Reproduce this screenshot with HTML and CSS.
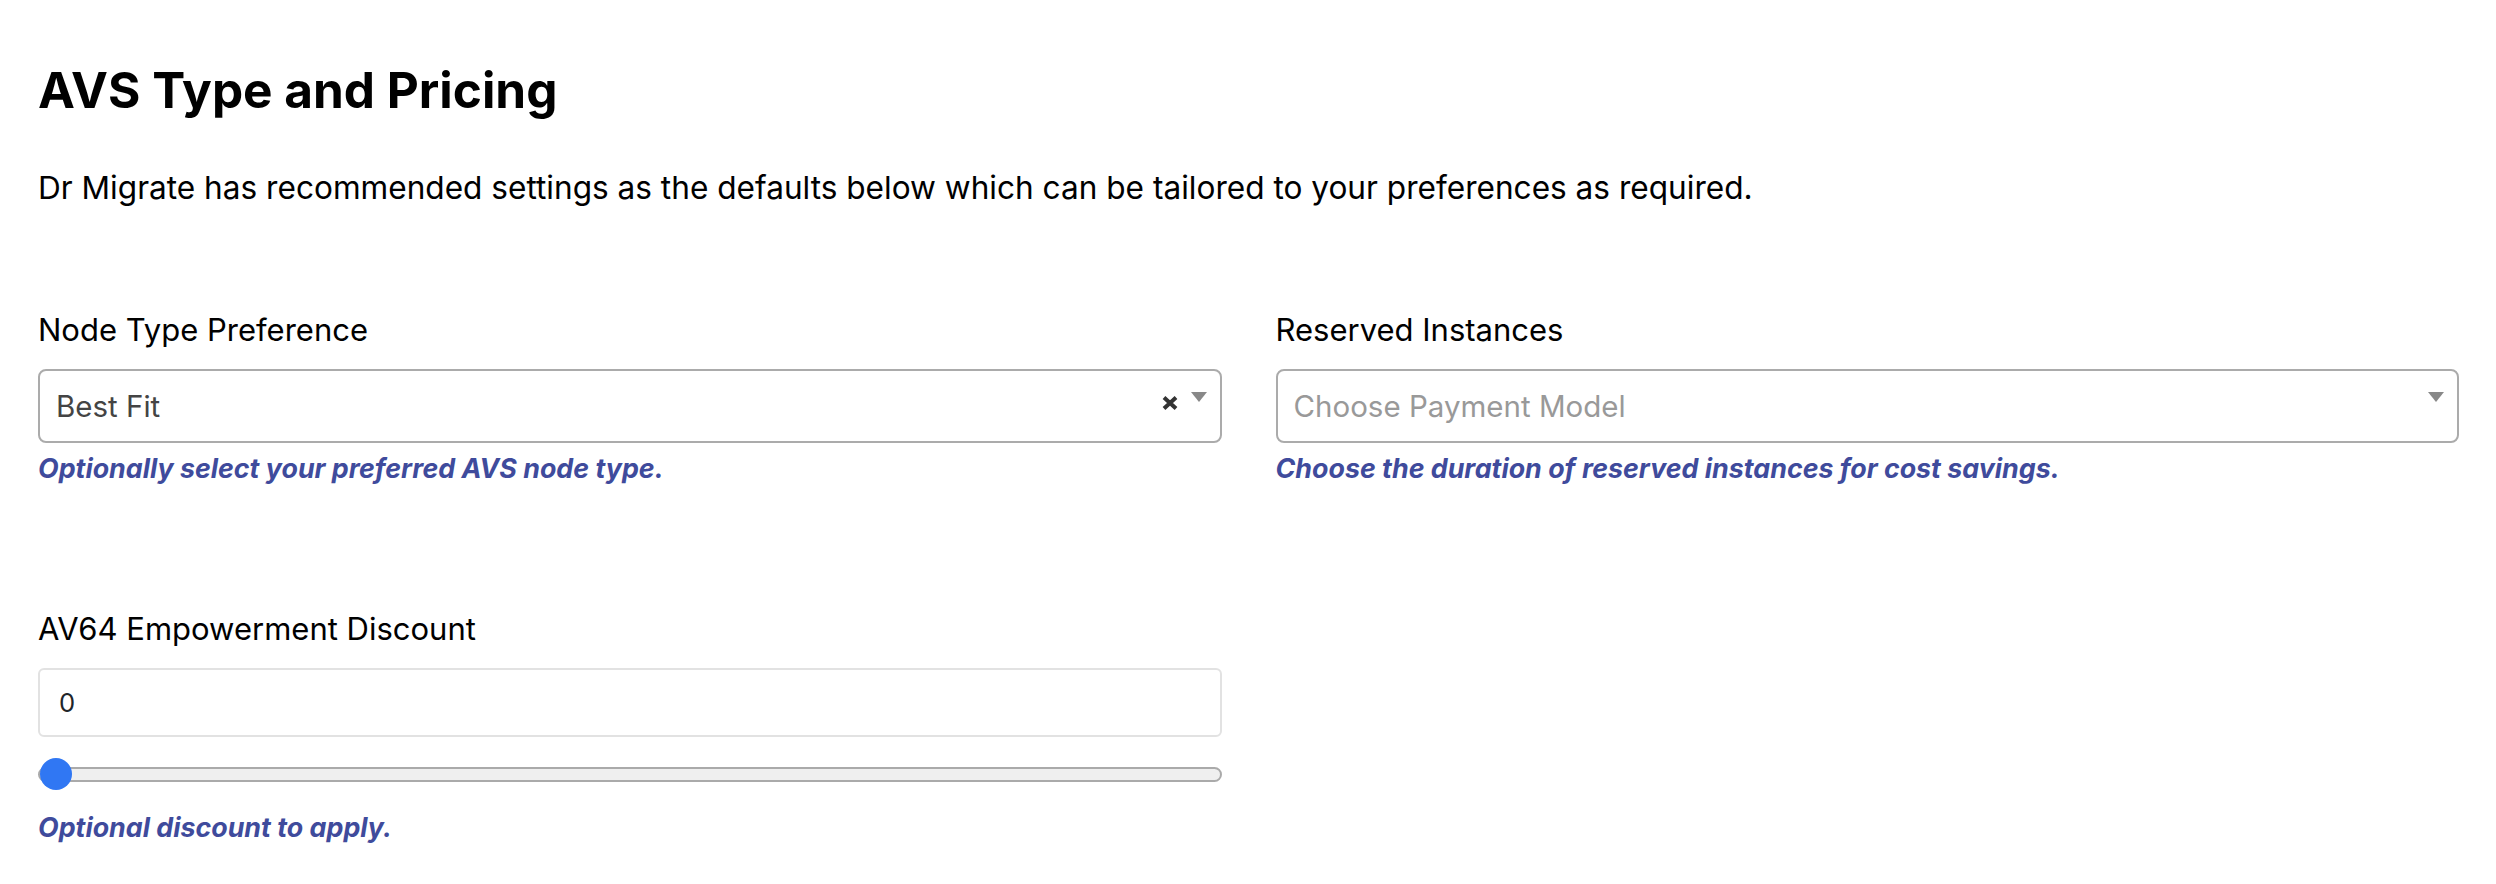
FILE: index.html
```html
<!DOCTYPE html>
<html lang="en">
<head>
<meta charset="utf-8">
<title>AVS Type and Pricing</title>
<link rel="stylesheet" href="styles.css">
</head>
<body>
<main class="page">
  <h2 class="title">AVS Type and Pricing</h2>
  <p class="intro">Dr Migrate has recommended settings as the defaults below which can be tailored to your preferences as required.</p>

  <div class="grid">
    <div class="field">
      <label class="label">Node Type Preference</label>
      <div class="select">
        <span class="select-value">Best Fit</span>
        <span class="select-clear" aria-label="clear">
          <svg width="16" height="14" viewBox="0 0 16 14"><path d="M2 1.5 L14 12.5 M14 1.5 L2 12.5" stroke="#333" stroke-width="4" fill="none"/></svg>
        </span>
        <span class="select-arrow"></span>
      </div>
      <div class="help">Optionally select your preferred AVS node type.</div>
    </div>

    <div class="field">
      <label class="label">Reserved Instances</label>
      <div class="select">
        <span class="select-value placeholder">Choose Payment Model</span>
        <span class="select-arrow"></span>
      </div>
      <div class="help">Choose the duration of reserved instances for cost savings.</div>
    </div>

    <div class="field row2">
      <label class="label">AV64 Empowerment Discount</label>
      <input class="number" type="text" value="0">
      <input class="range" type="range" min="0" max="100" value="0">
      <div class="help help-slider">Optional discount to apply.</div>
    </div>
  </div>
</main>
</body>
</html>
```

FILE: styles.css
```css
* { box-sizing: border-box; }

html, body {
  margin: 0;
  padding: 0;
  background: #ffffff;
}

body {
  font-family: "Inter", "Noto Sans", sans-serif;
  color: #000;
}

.page {
  padding: 60px 37px 0 38px;
}

.title {
  margin: 0;
  font-size: 49.5px;
  line-height: 61px;
  font-weight: 700;
  color: #000;
}

.intro {
  margin: 43px 0 0;
  font-size: 31.6px;
  line-height: 48px;
  font-weight: 400;
  color: #000;
}

.grid {
  display: grid;
  grid-template-columns: 1fr 1fr;
  column-gap: 54px;
  row-gap: 121px;
  margin-top: 96px;
}

.field {
  display: flex;
  flex-direction: column;
  min-width: 0;
}

.row2 { grid-column: 1; }

.label {
  font-size: 31px;
  line-height: 43px;
  font-weight: 400;
  color: #000;
}

.select {
  margin-top: 18px;
  height: 74px;
  border: 2px solid #ababab;
  border-radius: 8px;
  display: flex;
  align-items: flex-start;
  padding: 0 13px 0 16px;
}

.select-value {
  flex: 1;
  font-size: 29.5px;
  line-height: 70px;
  color: #444;
}

.select-value.placeholder { color: #999; }

.select-clear {
  margin-top: 25px;
  margin-right: 13px;
  display: flex;
}

.select-arrow {
  margin-top: 21px;
  width: 0;
  height: 0;
  border-left: 8px solid transparent;
  border-right: 8px solid transparent;
  border-top: 10px solid #888;
}

.help {
  margin-top: 7px;
  font-size: 26.8px;
  line-height: 36px;
  font-weight: 700;
  font-style: italic;
  color: #3f4b9c;
}

.number {
  margin: 18px 0 0;
  height: 69px;
  border: 2px solid #e2e2e2;
  border-radius: 6px;
  padding: 0 19px;
  font-family: "Inter", "Noto Sans", sans-serif;
  font-size: 25.6px;
  color: #212529;
  background: #fff;
  outline: none;
}

.range {
  -webkit-appearance: none;
  appearance: none;
  margin: 21px 0 0;
  width: 100%;
  height: 32px;
  background: transparent;
  padding: 0;
}

.range::-webkit-slider-runnable-track {
  height: 15px;
  background: #efefef;
  border: 2px solid #aaaaaa;
  border-radius: 8px;
}

.range::-webkit-slider-thumb {
  -webkit-appearance: none;
  appearance: none;
  width: 32px;
  height: 32px;
  border-radius: 50%;
  background: #3077f3;
  border: none;
  margin-top: -10.5px;
}

.help-slider { margin-top: 19px; }
```
